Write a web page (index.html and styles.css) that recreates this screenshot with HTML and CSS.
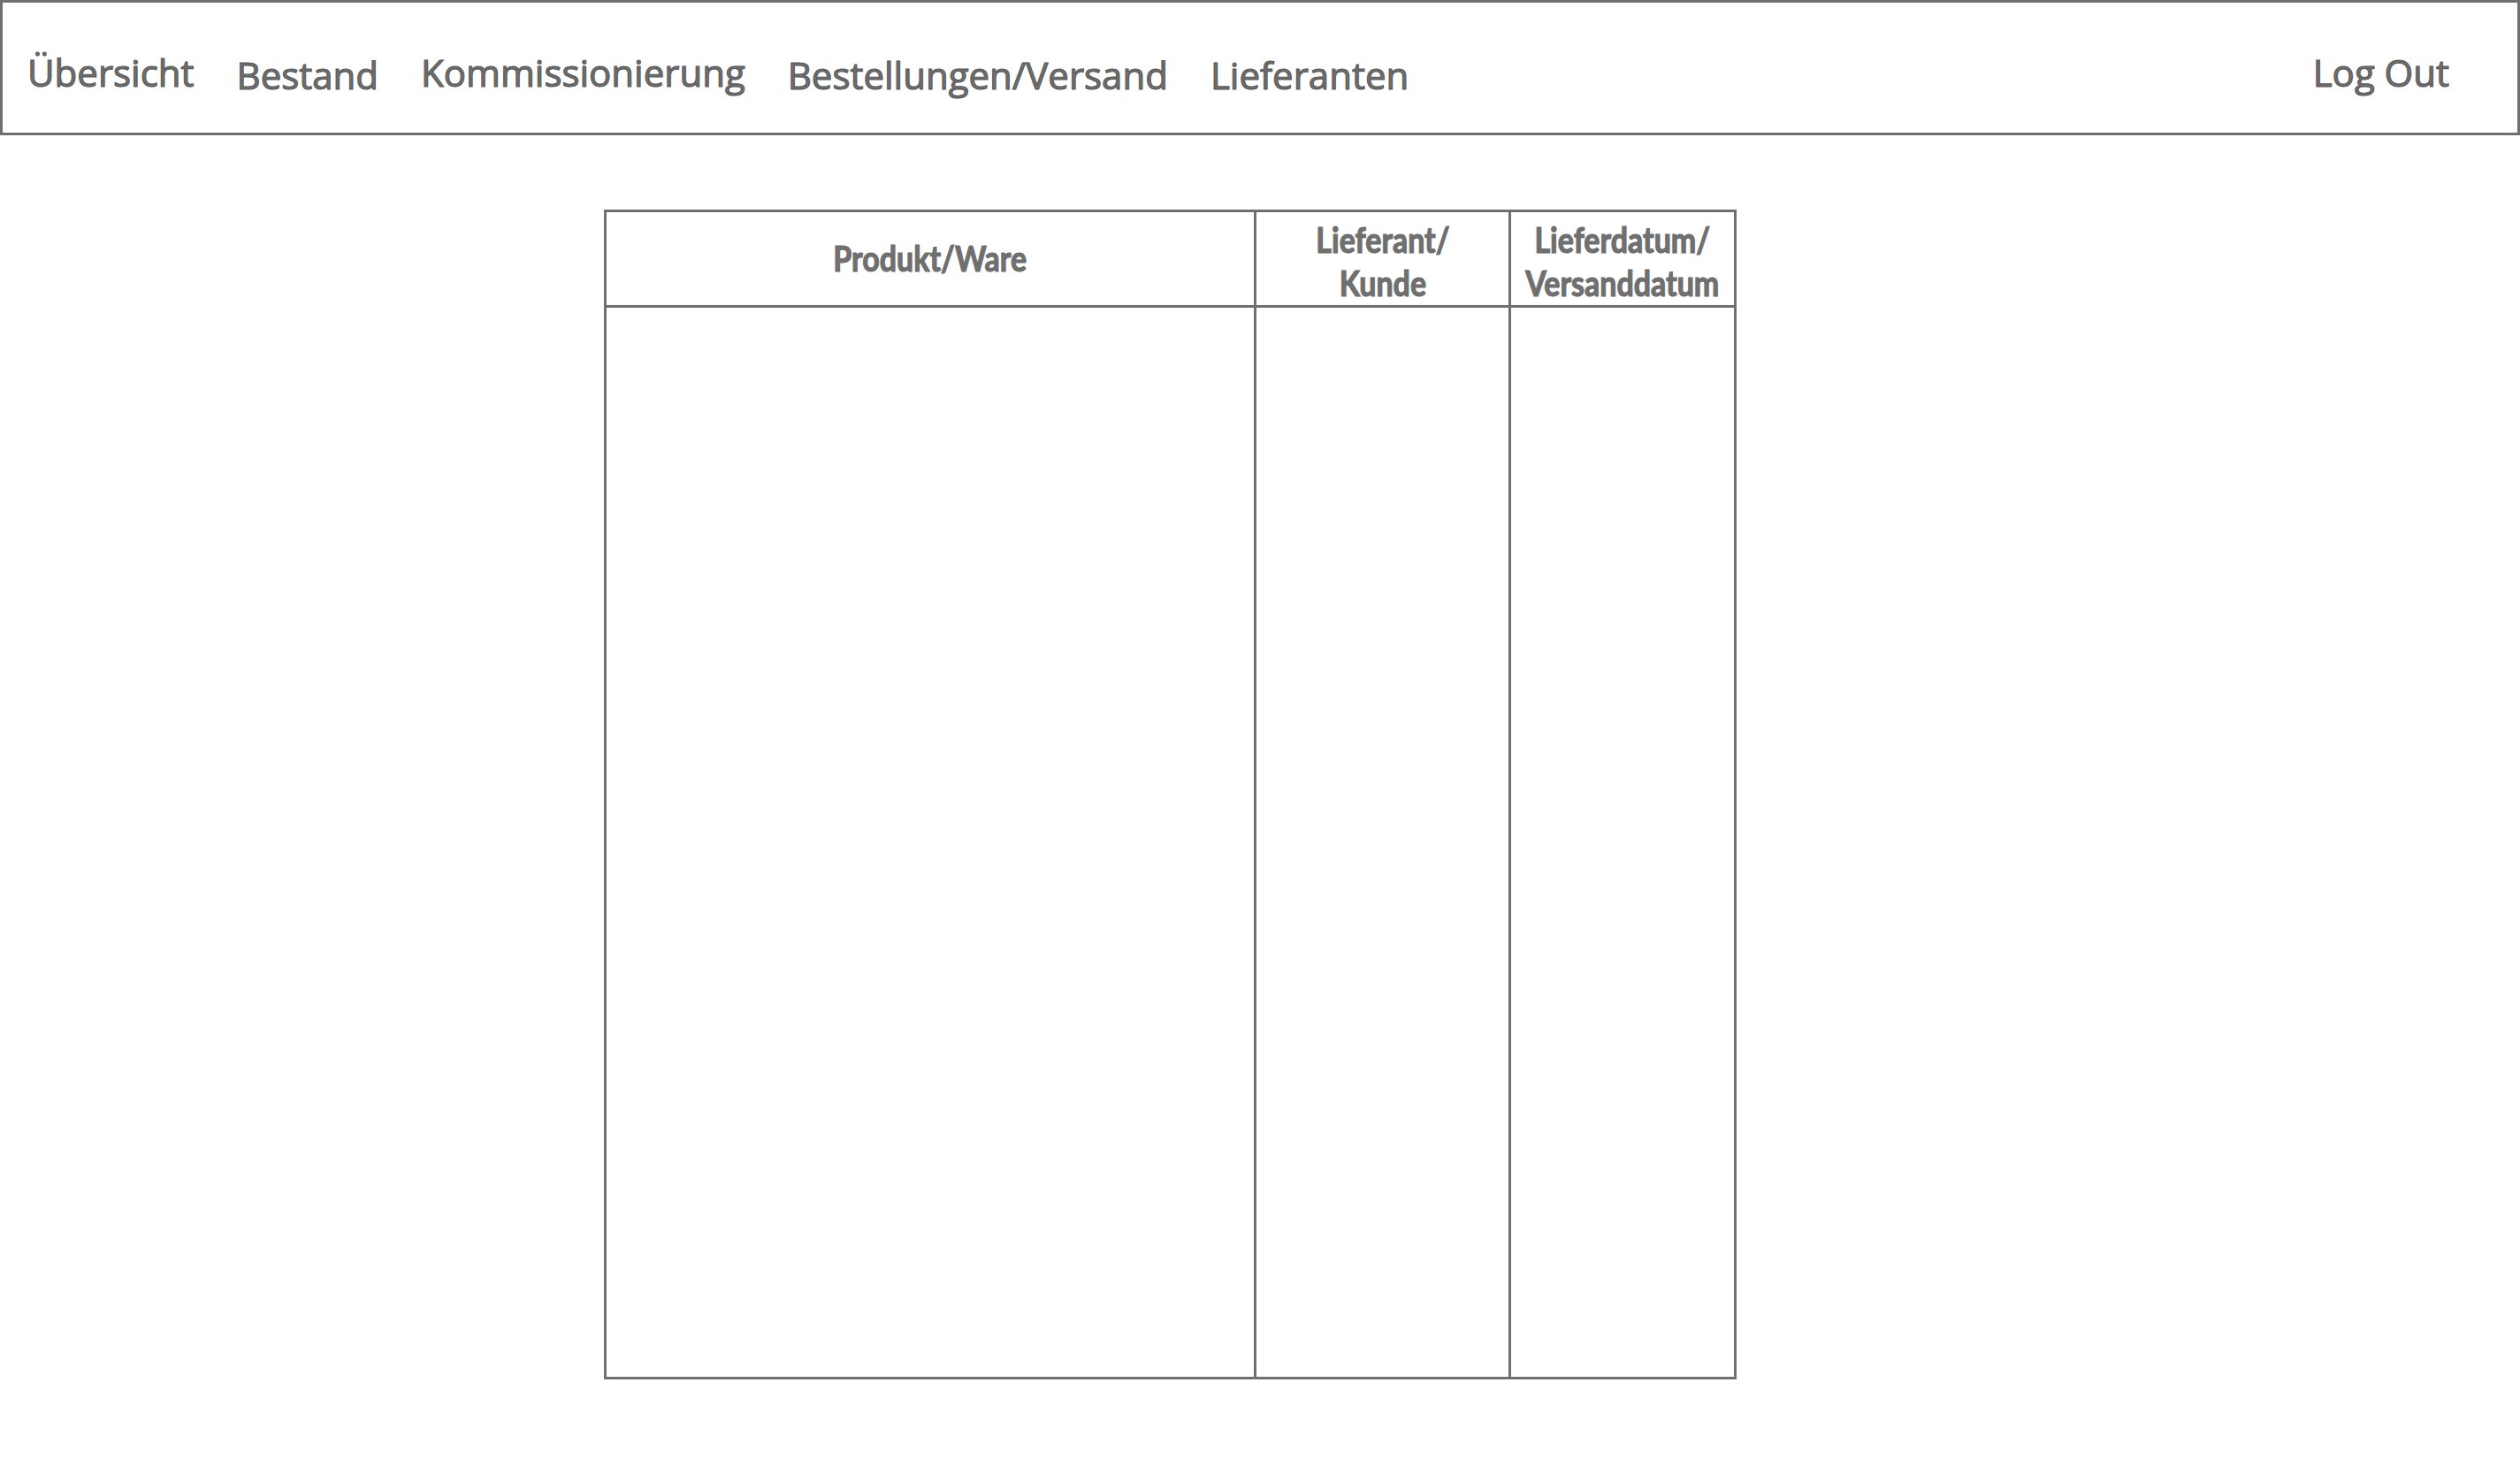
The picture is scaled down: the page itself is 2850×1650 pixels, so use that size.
FILE: index.html
```html
<!DOCTYPE html>
<html lang="de">
<head>
  <meta charset="UTF-8" />
  <meta name="viewport" content="width=device-width, initial-scale=1.0" />
  <title>Lager - Bestellungen</title>
  <link rel="stylesheet" href="styles.css">
</head>
<body>
  <nav class="topnav">
    <a class="nav-link" href="#">Übersicht</a>
    <a class="nav-link low" href="#">Bestand</a>
    <a class="nav-link" href="#">Kommissionierung</a>
    <a class="nav-link low" href="#">Bestellungen/Versand</a>
    <a class="nav-link low" href="#">Lieferanten</a>
    <a class="nav-link logout" href="#">Log Out</a>
  </nav>

  <main class="content">
    <div class="order-table">
      <div class="head-cell"><span class="head-text">Produkt/Ware</span></div>
      <div class="head-cell two-line"><span class="head-text">Lieferant/<br>Kunde</span></div>
      <div class="head-cell two-line"><span class="head-text">Lieferdatum/<br>Versanddatum</span></div>
      <div class="body-cell"></div>
      <div class="body-cell"></div>
      <div class="body-cell"></div>
    </div>
  </main>
</body>
</html>
```

FILE: styles.css
```css
* {
  box-sizing: border-box;
}
body {
  margin: 0;
  font-family: 'Open Sans', sans-serif;
  background: #fff;
  color: #707070;
}
.topnav {
  display: flex;
  align-items: center;
  gap: 48px;
  width: 2850px;
  height: 153px;
  padding: 9px 77px 0 28px;
  border: 3px solid #707070;
}
.nav-link {
  font-size: 42px;
  color: #6e6e6e;
  text-decoration: none;
  -webkit-text-stroke: 1.1px #595959;
}
.nav-link.low {
  position: relative;
  top: 3px;
}
.logout {
  margin-left: auto;
}
.content {
  padding: 84px 0 0 683px;
}
.order-table {
  display: grid;
  grid-template-columns: 732px 285px 252px;
  grid-template-rows: 105px 1209px;
  gap: 3px;
  padding: 3px;
  width: 1281px;
  background: #707070;
}
.head-cell {
  display: flex;
  align-items: center;
  justify-content: center;
  background: #fff;
  text-align: center;
}
.head-cell.two-line {
  padding-top: 6px;
}
.head-text {
  display: inline-block;
  font-family: Lato, 'Open Sans', sans-serif;
  font-size: 40px;
  font-weight: 700;
  line-height: 49px;
  color: #707070;
  -webkit-text-stroke: 1.2px #6c6c6c;
  transform: scaleX(0.85);
}
.body-cell {
  background: #fff;
}
```
